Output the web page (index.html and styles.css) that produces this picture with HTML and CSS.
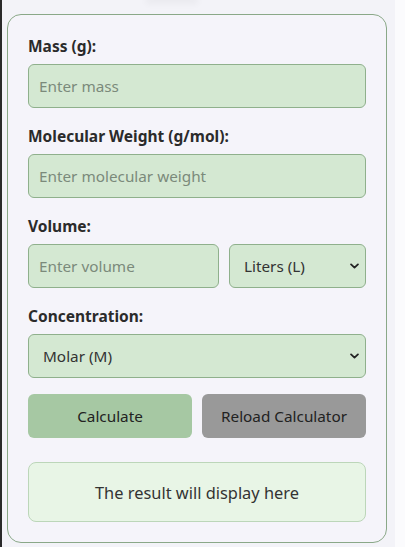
FILE: index.html
```html
<!DOCTYPE html>
<html lang="en">
<head>
<meta charset="utf-8">
<title>Molarity Calculator</title>
<link rel="stylesheet" href="styles.css">
</head>
<body>
<div class="page">
  <div class="top-shadow"></div>
  <form class="card">
    <div class="group">
      <label class="label" for="mass">Mass (g):</label>
      <input class="field" id="mass" type="text" placeholder="Enter mass">
    </div>
    <div class="group">
      <label class="label" for="mw">Molecular Weight (g/mol):</label>
      <input class="field" id="mw" type="text" placeholder="Enter molecular weight">
    </div>
    <div class="group">
      <label class="label" for="vol">Volume:</label>
      <div class="row">
        <input class="field vol-input" id="vol" type="text" placeholder="Enter volume">
        <div class="select-wrap vol-unit">
          <select class="field select"><option>Liters (L)</option></select>
          <svg class="chev" viewBox="0 0 10 6" width="9" height="6"><path d="M1.2 1.2 L5 4.8 L8.8 1.2" fill="none" stroke="#222" stroke-width="2" stroke-linecap="round" stroke-linejoin="round"/></svg>
        </div>
      </div>
    </div>
    <div class="group">
      <label class="label" for="conc">Concentration:</label>
      <div class="select-wrap">
        <select class="field select" id="conc"><option>Molar (M)</option></select>
        <svg class="chev" viewBox="0 0 10 6" width="9" height="6"><path d="M1.2 1.2 L5 4.8 L8.8 1.2" fill="none" stroke="#222" stroke-width="2" stroke-linecap="round" stroke-linejoin="round"/></svg>
      </div>
    </div>
    <div class="buttons">
      <button type="button" class="btn btn-calc">Calculate</button>
      <button type="button" class="btn btn-reload">Reload Calculator</button>
    </div>
    <div class="result">The result will display here</div>
  </form>
</div>
</body>
</html>
```
FILE: styles.css
```css
html {
  background: #fbfbfd;
}
body {
  margin: 0;
  font-family: "Noto Sans", "Open Sans", sans-serif;
  color: #333;
}
.page {
  width: 395px;
  min-height: 547px;
  box-sizing: border-box;
  background: #f3f3f8;
  border-left: 2px solid #2a2a2a;
  padding: 0 0 0 5px;
  overflow: hidden;
}
.top-shadow {
  width: 44px;
  height: 0;
  margin-left: 143px;
  box-shadow: 0 0 7px 4px rgba(0, 0, 0, 0.045);
}
.card {
  margin-top: 14px;
  width: 380px;
  box-sizing: border-box;
  border: 1px solid #8aa888;
  border-radius: 14px;
  background: #f5f4fa;
  padding: 21px 20px 20px 20px;
}
.group {
  margin-bottom: 18px;
}
.label {
  display: block;
  font-weight: 700;
  font-size: 15.5px;
  line-height: 20px;
  margin-bottom: 8px;
  color: #2b2b2b;
}
.field {
  display: block;
  width: 100%;
  height: 44px;
  box-sizing: border-box;
  border: 1px solid #8fb08c;
  border-radius: 6px;
  background: #d4e8d2;
  font-family: inherit;
  font-size: 15.3px;
  color: #333;
  padding: 0 10px;
  margin: 0;
  outline: none;
}
.field::placeholder {
  color: #7b8a7b;
}
.row {
  display: flex;
  gap: 10px;
}
.vol-input {
  width: 191px;
  flex: none;
}
.vol-unit {
  flex: 1;
}
.select-wrap {
  position: relative;
}
.select {
  appearance: none;
  -webkit-appearance: none;
  padding-left: 14px;
  padding-right: 30px;
}
.chev {
  position: absolute;
  right: 7px;
  top: 19px;
  pointer-events: none;
}
.buttons {
  display: flex;
  gap: 10px;
  margin-top: -2px;
}
.btn {
  flex: 1;
  height: 44px;
  border: none;
  border-radius: 6px;
  font-family: inherit;
  font-size: 15.3px;
  color: #222;
  margin: 0;
  padding: 0;
}
.btn-calc {
  background: #a6c8a3;
}
.btn-reload {
  background: #999999;
}
.result {
  margin-top: 24px;
  height: 60px;
  box-sizing: border-box;
  border: 1px solid #bcd6b9;
  border-radius: 8px;
  background: #e8f5e6;
  display: flex;
  align-items: center;
  justify-content: center;
  font-size: 16.4px;
  color: #333;
}
```
